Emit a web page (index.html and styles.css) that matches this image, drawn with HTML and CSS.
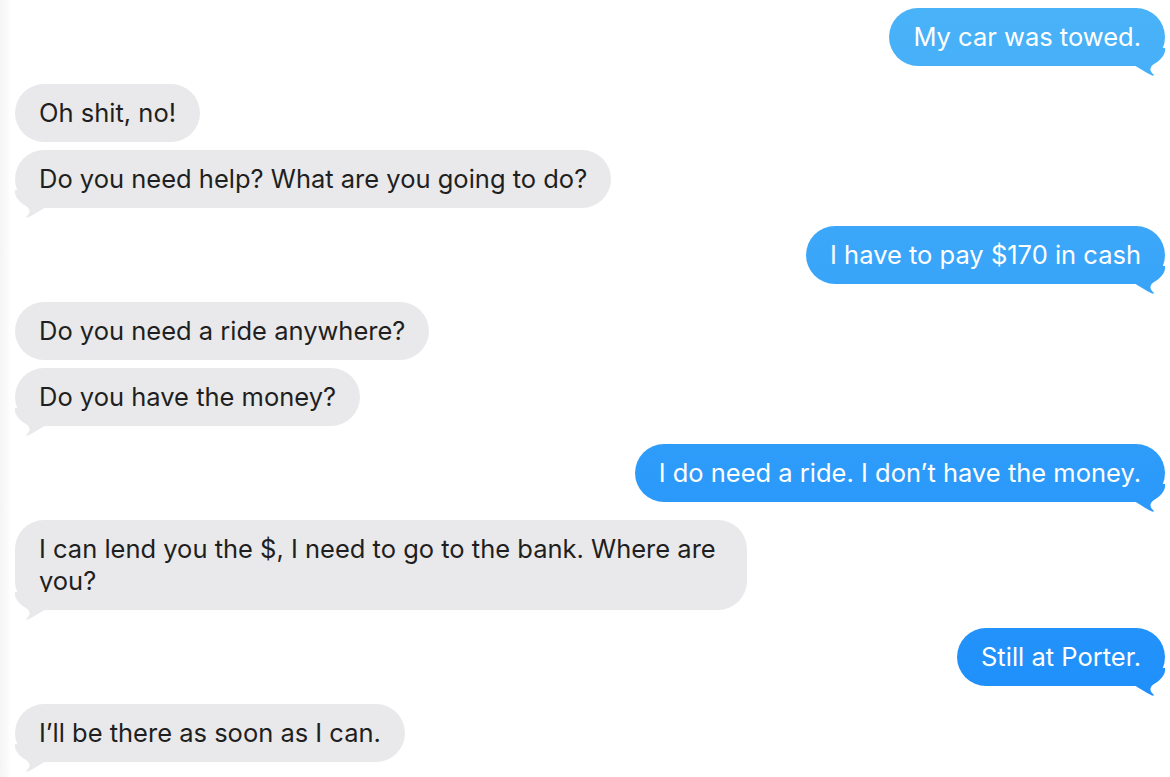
FILE: index.html
```html
<!DOCTYPE html>
<html lang="en">

<head>
    <meta charset="UTF-8">
    <meta name="viewport" content="width=device-width, initial-scale=1.0">
    <title>Messages</title>
    <link rel="stylesheet" href="styles.css">
</head>

<body>
    <div id="razgovor">
        <div class="poruka poslata rep">My car was towed.</div>

        <div class="poruka primljena nova">Oh shit, no!</div>
        <div class="poruka primljena rep">Do you need help? What are you going to do?</div>

        <div class="poruka poslata nova rep">I have to pay $170 in cash</div>

        <div class="poruka primljena nova">Do you need a ride anywhere?</div>
        <div class="poruka primljena rep">Do you have the money?</div>

        <div class="poruka poslata nova rep">I do need a ride. I don’t have the money.</div>

        <div class="poruka primljena nova rep">I can lend you the $, I need to go to the bank. Where are you?</div>

        <div class="poruka poslata nova rep">Still at Porter.</div>

        <div class="poruka primljena nova rep">I’ll be there as soon as I can.</div>
    </div>
</body>

</html>
```

FILE: styles.css
```css
body {
    margin: 0;
    background: linear-gradient(to right, #f5f5f5 0, #fafafa 7px, #ffffff 11px);
    font-family: Inter, "Noto Sans", sans-serif;
    height: 777px;
    overflow: hidden;
}

#razgovor {
    display: flex;
    flex-direction: column;
    padding: 8px 5px 0 15px;
}

.poruka {
    position: relative;
    max-width: 684px;
    padding: 13px 24px;
    margin-top: 8px;
    border-radius: 29px;
    font-size: 25.5px;
    line-height: 32px;
}

.poruka:first-child {
    margin-top: 0;
}

.nova {
    margin-top: 18px;
}

.primljena {
    align-self: flex-start;
    background-color: #e9e9eb;
    color: #1f1f21;
}

.poslata {
    align-self: flex-end;
    color: #ffffff;
    background: linear-gradient(to bottom, #4ab3f8 0, #1a8bfb 777px);
    background-attachment: fixed;
}

.rep::after {
    content: "";
    position: absolute;
    bottom: -10px;
    width: 36px;
    height: 28px;
    clip-path: path("M0 0 H35 C36 6 31 12 24 16 C20 18.5 19.5 22 22 25 L24 27 C23.5 27.8 22.5 27.8 21.5 27.3 C15 24 9 20 4 17 L0 17 Z");
}

.poslata.rep::after {
    right: -1px;
    background: linear-gradient(to bottom, #4ab3f8 0, #1a8bfb 777px);
    background-attachment: fixed;
}

.primljena.rep::after {
    left: -1px;
    background-color: #e9e9eb;
    transform: scaleX(-1);
}
```
